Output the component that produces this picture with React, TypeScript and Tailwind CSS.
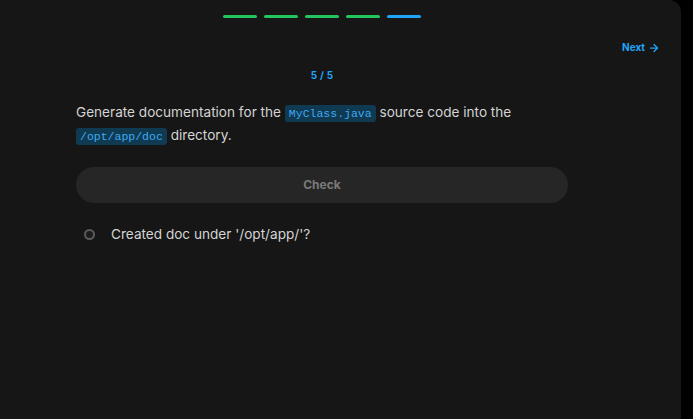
import { ArrowRight } from 'lucide-react';

const steps = ['done', 'done', 'done', 'done', 'current'];

function Code({ children }: { children: React.ReactNode }) {
  return (
    <code className="rounded-[3px] bg-[#0f3a52] px-[4px] py-[2px] text-[11.5px] leading-none text-[#3fa9f0] font-['Liberation_Mono',monospace]">
      {children}
    </code>
  );
}

export default function App() {
  return (
    <div className="h-[419px] w-[693px] bg-black font-['Inter',sans-serif]">
      <div className="h-full w-[681px] rounded-tr-[12px] bg-[#161616] px-[76px] pt-[15px] relative">
        {/* step progress */}
        <div className="flex justify-center gap-[7px] w-[492px]">
          {steps.map((s, i) => (
            <div
              key={i}
              className={`h-[3px] w-[34px] rounded-full ${s === 'current' ? 'bg-[#1ea5f5]' : 'bg-[#22c55e]'}`}
            />
          ))}
        </div>

        <button className="absolute right-[21px] top-[40px] flex items-center gap-[3px] text-[10px] font-bold text-[#1ea5f5]">
          Next
          <ArrowRight className="h-[12px] w-[12px]" strokeWidth={2.5} />
        </button>

        <div className="w-[492px] mt-[50px] text-center text-[10px] font-bold text-[#1ea5f5] tracking-wide">5 / 5</div>

        <p className="w-[492px] mt-[18px] text-[13.6px] leading-[22px] text-[#d4d4d4]">
          Generate documentation for the <Code>MyClass.java</Code> source code into the{' '}
          <span className="inline-block mt-[1px]">
            <Code>/opt/app/doc</Code> directory.
          </span>
        </p>

        <button className="mt-[21px] flex h-[36px] w-[492px] items-center justify-center rounded-full bg-[#262626] text-[12px] font-bold text-[#7a7a7a]">
          Check
        </button>

        <div className="mt-[21px] flex items-center gap-[16px] pl-[8px] text-[13.6px] text-[#d4d4d4]">
          <span className="h-[11px] w-[11px] rounded-full border-2 border-[#5a5a5a] bg-[#1c1c1c]" />
          <span>Created doc under '/opt/app/'?</span>
        </div>
      </div>
    </div>
  );
}
